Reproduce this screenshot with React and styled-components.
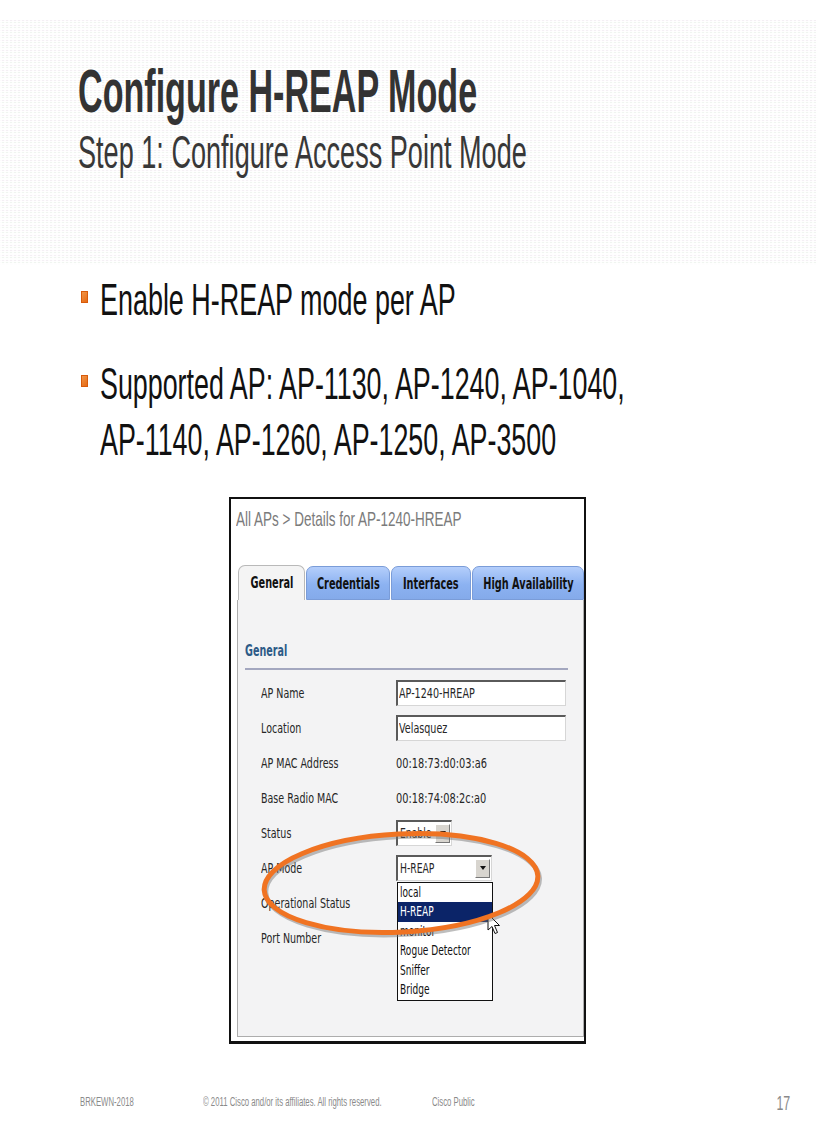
import React from 'react';
import styled, { createGlobalStyle } from 'styled-components';

const Global = createGlobalStyle`
  html, body { margin: 0; padding: 0; background: #fff; }
  #root { width: 816px; }
`;

const SANS = `"Liberation Sans", Arial, sans-serif`;
const UIFONT = `"DejaVu Sans", Verdana, sans-serif`;

const Page = styled.div`
  width: 816px;
  height: 1123px;
  overflow: hidden;
  display: flex;
  flex-direction: column;
  background: #fff;
  font-family: ${SANS};
`;

const Squeeze = styled.span`
  display: inline-block;
  white-space: nowrap;
  transform: scaleX(${p => p.$x});
  transform-origin: ${p => p.$origin || 'left'} center;
`;

const Header = styled.header`
  margin-top: 20px;
  height: 245px;
  box-sizing: border-box;
  padding: 40px 0 0 78px;
  background:
    repeating-linear-gradient(to right, rgba(255,255,255,0.8) 0 2px, transparent 2px 4px),
    repeating-linear-gradient(to bottom, #f4eff4 0 1px, #fefefe 1px 2px, #f0f5f0 2px 3px, #fefefe 3px 5px);
`;

const Title = styled.h1`
  margin: 0;
  font-size: 62px;
  line-height: 61px;
  font-weight: 700;
  color: #333;
`;

const Subtitle = styled.h2`
  margin: 6px 0 0;
  font-size: 46px;
  line-height: 50px;
  font-weight: 400;
  color: #383838;
`;

const Bullets = styled.ul`
  list-style: none;
  margin: 7px 0 0;
  padding: 0 0 0 81px;
  display: flex;
  flex-direction: column;
  gap: 28px;
`;

const Bullet = styled.li`
  display: flex;
  align-items: flex-start;
  gap: 12px;
`;

const Square = styled.span`
  flex: none;
  width: 7px;
  height: 12px;
  margin-top: 19px;
  background: linear-gradient(135deg, #f39a4c, #e4650f);
  box-shadow: inset 0 0 0 1px #d85a0a;
`;

const BulletText = styled.div`
  font-size: 44px;
  line-height: 56px;
  color: #111;
`;

const Shot = styled.section`
  margin: 29px 0 0 229px;
  width: 357px;
  height: 547px;
  box-sizing: border-box;
  border: 2px solid #111;
  border-bottom-width: 3px;
  background: #fff;
  display: flex;
  flex-direction: column;
`;

const Crumb = styled.div`
  height: 66px;
  box-sizing: border-box;
  padding: 8px 0 0 5px;
  font-size: 21px;
  line-height: 24px;
  color: #7b7b7b;
`;

const Tabs = styled.div`
  display: flex;
  gap: 1px;
  padding-left: 7px;
  height: 35px;
  align-items: flex-end;
  font-family: ${UIFONT};
`;

const Tab = styled.div`
  width: ${p => p.$w}px;
  height: ${p => (p.$active ? 35 : 34)}px;
  box-sizing: border-box;
  border: 1px solid ${p => (p.$active ? '#b9b9b9' : '#7a9cd8')};
  border-bottom: ${p => (p.$active ? 'none' : '1px solid #7a9cd8')};
  border-radius: 7px 7px 0 0;
  background: ${p => (p.$active ? '#f4f4f4' : 'linear-gradient(#b4cefb, #8cb2f1 55%, #84aaea)')};
  display: flex;
  align-items: center;
  justify-content: center;
  font-size: 15px;
  font-weight: 700;
  color: #111;
  padding-top: ${p => (p.$active ? 0 : 1)}px;
`;

const Panel = styled.div`
  position: relative;
  flex: 1;
  margin: 0 0 4px 6px;
  border: 1px solid #adadad;
  border-top: none;
  background: #f3f3f4;
  font-family: ${UIFONT};
`;

const SectionTitle = styled.div`
  margin-top: 42px;
  padding-left: 7px;
  font-size: 15px;
  line-height: 18px;
  font-weight: 700;
  color: #2d5a87;
`;

const Rule = styled.div`
  margin: 8px 15px 0 7px;
  height: 2px;
  background: #a3a7bf;
`;

const Form = styled.div`
  margin-top: 5px;
  padding-left: 23px;
  display: grid;
  grid-template-columns: 135px 1fr;
  grid-auto-rows: 35px;
  align-items: center;
  font-size: 14px;
  color: #262626;
`;

const Label = styled.div`
  line-height: 16px;
`;

const Cell = styled.div`
  display: flex;
  align-items: center;
`;

const bevel = `
  box-sizing: border-box;
  height: 26px;
  border-top: 2px solid #5a5a5a;
  border-left: 2px solid #5a5a5a;
  border-right: 1px solid #d6d6d6;
  border-bottom: 1px solid #d6d6d6;
  background: #fff;
  display: flex;
  align-items: center;
`;

const Input = styled.div`
  ${bevel}
  width: 170px;
  padding-left: 1px;
`;

const Select = styled.div`
  ${bevel}
  position: relative;
  width: ${p => p.$w}px;
  padding-left: 2px;
`;

const SelectText = styled.span`
  flex: 1;
  min-width: 0;
`;

const Arrow = styled.span`
  flex: none;
  margin-right: 1px;
  width: 15px;
  height: 19px;
  box-sizing: border-box;
  border: 1px solid #fff;
  border-right-color: #777;
  border-bottom-color: #777;
  background: #d8d5cf;
  display: flex;
  align-items: center;
  justify-content: center;
  &::after {
    content: '';
    border-left: 3px solid transparent;
    border-right: 3px solid transparent;
    border-top: 4px solid #111;
  }
`;

const DropList = styled.ul`
  position: absolute;
  top: calc(100% + 2px);
  left: -1px;
  width: 96px;
  margin: 0;
  padding: 0;
  list-style: none;
  box-sizing: border-box;
  border: 1px solid #111;
  background: #fff;
`;

const DropItem = styled.li`
  height: 19.6px;
  line-height: 19.6px;
  padding-left: 2px;
  background: ${p => (p.$selected ? '#0b2468' : 'transparent')};
  color: ${p => (p.$selected ? '#fff' : '#111')};
`;

const Overlay = styled.svg`
  position: absolute;
  left: ${p => p.$left}px;
  top: ${p => p.$top}px;
  overflow: visible;
  pointer-events: none;
`;

const Footer = styled.footer`
  margin-top: 51px;
  padding: 0 26px 0 80px;
  display: grid;
  grid-template-columns: 123px 229px 1fr auto;
  align-items: start;
  font-size: 12.5px;
  line-height: 15px;
  color: #8a8a8a;
`;

const PageNum = styled.div`
  font-size: 20px;
  line-height: 20px;
  margin-top: -2px;
  color: #8a8a8a;
`;

const rows = [
  ['AP Name', { input: 'AP-1240-HREAP' }],
  ['Location', { input: 'Velasquez' }],
  ['AP MAC Address', { text: '00:18:73:d0:03:a6' }],
  ['Base Radio MAC', { text: '00:18:74:08:2c:a0' }],
  ['Status', { select: 'Enable', w: 56 }],
  ['AP Mode', { select: 'H-REAP', w: 96, open: true }],
  ['Operational Status', {}],
  ['Port Number', {}],
];

const modes = ['local', 'H-REAP', 'monitor', 'Rogue Detector', 'Sniffer', 'Bridge'];

const tabs = [
  ['General', 67, true],
  ['Credentials', 84],
  ['Interfaces', 80],
  ['High Availability', 112],
];

function Value({ v }) {
  if (v.input) {
    return (
      <Input>
        <Squeeze $x={0.685}>{v.input}</Squeeze>
      </Input>
    );
  }
  if (v.text) return <Squeeze $x={0.7}>{v.text}</Squeeze>;
  if (v.select) {
    return (
      <Select $w={v.w}>
        <SelectText><Squeeze $x={0.66}>{v.select}</Squeeze></SelectText>
        <Arrow />
        {v.open && (
          <DropList>
            {modes.map(m => (
              <DropItem key={m} $selected={m === 'H-REAP'}>
                <Squeeze $x={0.645}>{m}</Squeeze>
              </DropItem>
            ))}
          </DropList>
        )}
      </Select>
    );
  }
  return null;
}

export default function App() {
  return (
    <Page>
      <Global />
      <Header>
        <Title><Squeeze $x={0.55}>Configure H-REAP Mode</Squeeze></Title>
        <Subtitle><Squeeze $x={0.589}>Step 1: Configure Access Point Mode</Squeeze></Subtitle>
      </Header>

      <Bullets>
        <Bullet>
          <Square />
          <BulletText><Squeeze $x={0.612}>Enable H-REAP mode per AP</Squeeze></BulletText>
        </Bullet>
        <Bullet>
          <Square />
          <BulletText>
            <Squeeze $x={0.61}>
              Supported AP: AP-1130, AP-1240, AP-1040,
              <br />
              AP-1140, AP-1260, AP-1250, AP-3500
            </Squeeze>
          </BulletText>
        </Bullet>
      </Bullets>

      <Shot>
        <Crumb><Squeeze $x={0.643}>All APs &gt; Details for AP-1240-HREAP</Squeeze></Crumb>
        <Tabs>
          {tabs.map(([name, w, active]) => (
            <Tab key={name} $w={w} $active={active}>
              <Squeeze $x={0.65} $origin="center">{name}</Squeeze>
            </Tab>
          ))}
        </Tabs>
        <Panel>
          <SectionTitle><Squeeze $x={0.64}>General</Squeeze></SectionTitle>
          <Rule />
          <Form>
            {rows.map(([label, v]) => (
              <React.Fragment key={label}>
                <Label><Squeeze $x={0.68}>{label}</Squeeze></Label>
                <Cell><Value v={v} /></Cell>
              </React.Fragment>
            ))}
          </Form>

          <Overlay $left={249} $top={313} width="14" height="22" viewBox="0 0 14 22">
            <path d="M1 1 L1 17 L5 13.5 L8 20.5 L10.5 19.5 L7.5 12.5 L12.5 12.5 Z" fill="#fff" stroke="#111" strokeWidth="1" strokeLinejoin="round" />
          </Overlay>

          <Overlay $left={13} $top={223} width="300" height="120" viewBox="0 0 300 120">
            <g transform="rotate(-3 150 60)">
              <ellipse cx="151.5" cy="62.5" rx="137" ry="49" fill="none" stroke="rgba(110,110,110,0.45)" strokeWidth="5" />
              <ellipse cx="150" cy="60" rx="137" ry="49" fill="none" stroke="#f07322" strokeWidth="5" />
            </g>
          </Overlay>
        </Panel>
      </Shot>

      <Footer>
        <div><Squeeze $x={0.62}>BRKEWN-2018</Squeeze></div>
        <div><Squeeze $x={0.62}>© 2011 Cisco and/or its affiliates. All rights reserved.</Squeeze></div>
        <div><Squeeze $x={0.62}>Cisco Public</Squeeze></div>
        <PageNum><Squeeze $x={0.62} $origin="right">17</Squeeze></PageNum>
      </Footer>
    </Page>
  );
}
